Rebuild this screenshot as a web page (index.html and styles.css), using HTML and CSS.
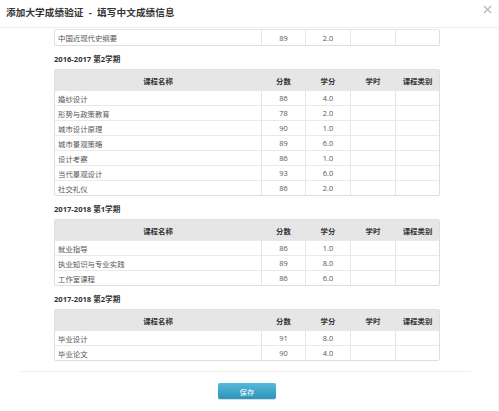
FILE: index.html
```html
<!DOCTYPE html>
<html lang="zh-CN">
<head>
<meta charset="utf-8">
<title>添加大学成绩验证</title>
<link rel="stylesheet" href="styles.css">
</head>
<body>
<div class="modal">
  <div class="modal-head">
    <h1 class="title">添加大学成绩验证 &nbsp;-&nbsp; 填写中文成绩信息</h1>
    <svg class="close" width="9" height="9" viewBox="0 0 9 9"><path d="M1 1L8 8M8 1L1 8" stroke="#b5b5b5" stroke-width="1.2" fill="none"/></svg>
  </div>
  <div class="modal-body">
    <div class="grade-table partial">
      <div class="row"><div class="c name">中国近现代史纲要</div><div class="c">89</div><div class="c">2.0</div><div class="c"></div><div class="c"></div></div>
    </div>

    <div class="term">2016-2017 第2学期</div>
    <div class="grade-table">
      <div class="row head"><div class="c">课程名称</div><div class="c">分数</div><div class="c">学分</div><div class="c">学时</div><div class="c">课程类别</div></div>
      <div class="row"><div class="c name">婚纱设计</div><div class="c">86</div><div class="c">4.0</div><div class="c"></div><div class="c"></div></div>
      <div class="row"><div class="c name">形势与政策教育</div><div class="c">78</div><div class="c">2.0</div><div class="c"></div><div class="c"></div></div>
      <div class="row"><div class="c name">城市设计原理</div><div class="c">90</div><div class="c">1.0</div><div class="c"></div><div class="c"></div></div>
      <div class="row"><div class="c name">城市景观策略</div><div class="c">89</div><div class="c">6.0</div><div class="c"></div><div class="c"></div></div>
      <div class="row"><div class="c name">设计考察</div><div class="c">86</div><div class="c">1.0</div><div class="c"></div><div class="c"></div></div>
      <div class="row"><div class="c name">当代景观设计</div><div class="c">93</div><div class="c">6.0</div><div class="c"></div><div class="c"></div></div>
      <div class="row"><div class="c name">社交礼仪</div><div class="c">86</div><div class="c">2.0</div><div class="c"></div><div class="c"></div></div>
    </div>

    <div class="term">2017-2018 第1学期</div>
    <div class="grade-table">
      <div class="row head"><div class="c">课程名称</div><div class="c">分数</div><div class="c">学分</div><div class="c">学时</div><div class="c">课程类别</div></div>
      <div class="row"><div class="c name">就业指导</div><div class="c">86</div><div class="c">1.0</div><div class="c"></div><div class="c"></div></div>
      <div class="row"><div class="c name">执业知识与专业实践</div><div class="c">89</div><div class="c">8.0</div><div class="c"></div><div class="c"></div></div>
      <div class="row"><div class="c name">工作室课程</div><div class="c">86</div><div class="c">6.0</div><div class="c"></div><div class="c"></div></div>
    </div>

    <div class="term">2017-2018 第2学期</div>
    <div class="grade-table">
      <div class="row head"><div class="c">课程名称</div><div class="c">分数</div><div class="c">学分</div><div class="c">学时</div><div class="c">课程类别</div></div>
      <div class="row"><div class="c name">毕业设计</div><div class="c">91</div><div class="c">8.0</div><div class="c"></div><div class="c"></div></div>
      <div class="row"><div class="c name">毕业论文</div><div class="c">90</div><div class="c">4.0</div><div class="c"></div><div class="c"></div></div>
    </div>
  </div>
  <div class="modal-foot">
    <button class="save">保存</button>
  </div>
</div>
</body>
</html>
```

FILE: styles.css
```css
* { box-sizing: border-box; }
html, body { margin: 0; padding: 0; background: #fff; }
body {
  font-family: "Open Sans", "Noto Sans CJK SC", sans-serif;
  color: #555;
  width: 499px;
  height: 411px;
  overflow: hidden;
}
.modal { width: 499px; height: 411px; border-right: 1px solid #f1f1f1; }
.modal-head {
  height: 28px;
  border-bottom: 1px solid #eeeeee;
  display: flex;
  align-items: center;
  justify-content: space-between;
  padding: 0 6px 3px 6px;
}
.title {
  margin: 0;
  font-size: 9.6px;
  font-weight: bold;
  color: #333;
  letter-spacing: 0.1px;
}
.close { margin-right: 0; margin-top: -5px; }
.modal-body { padding: 1px 0 0 54px; }
.grade-table {
  width: 386px;
  border: 1px solid #dedede;
  border-radius: 2px;
  overflow: hidden;
}
.grade-table.partial { border-top: 1px solid #e6e6e6; }
.row {
  display: grid;
  grid-template-columns: 206px 44px 45px 45px 1fr;
  height: 15px;
  border-top: 1px solid #e9e9e9;
}
.row:first-child { border-top: 0; }
.row.head {
  height: 20px;
  background: #e6e6e6;
  color: #333;
  font-weight: bold;
}
.c {
  display: flex;
  align-items: center;
  justify-content: center;
  font-size: 7.4px;
  border-left: 1px solid #e6e6e6;
  white-space: nowrap;
}
.c:first-child { border-left: 0; }
.c.name { justify-content: flex-start; padding-left: 3px; }
.term {
  font-size: 7.6px;
  font-weight: bold;
  color: #333;
  line-height: 10px;
  padding-top: 8px;
  padding-bottom: 5px;
}
.modal-foot {
  margin: 10px 27px 0 20px;
  border-top: 1px solid #f0f0f0;
  display: flex;
  justify-content: flex-start;
  padding: 11px 0 0 198px;
}
.save {
  width: 58px;
  height: 16px;
  border: 0;
  border-radius: 2px;
  background: linear-gradient(#55b9da, #2d93b8);
  color: #fff;
  font-family: "Noto Sans CJK SC", sans-serif;
  font-size: 7.4px;
  padding: 0;
  box-shadow: 0 1px 1px rgba(0,0,0,0.15);
}
```
